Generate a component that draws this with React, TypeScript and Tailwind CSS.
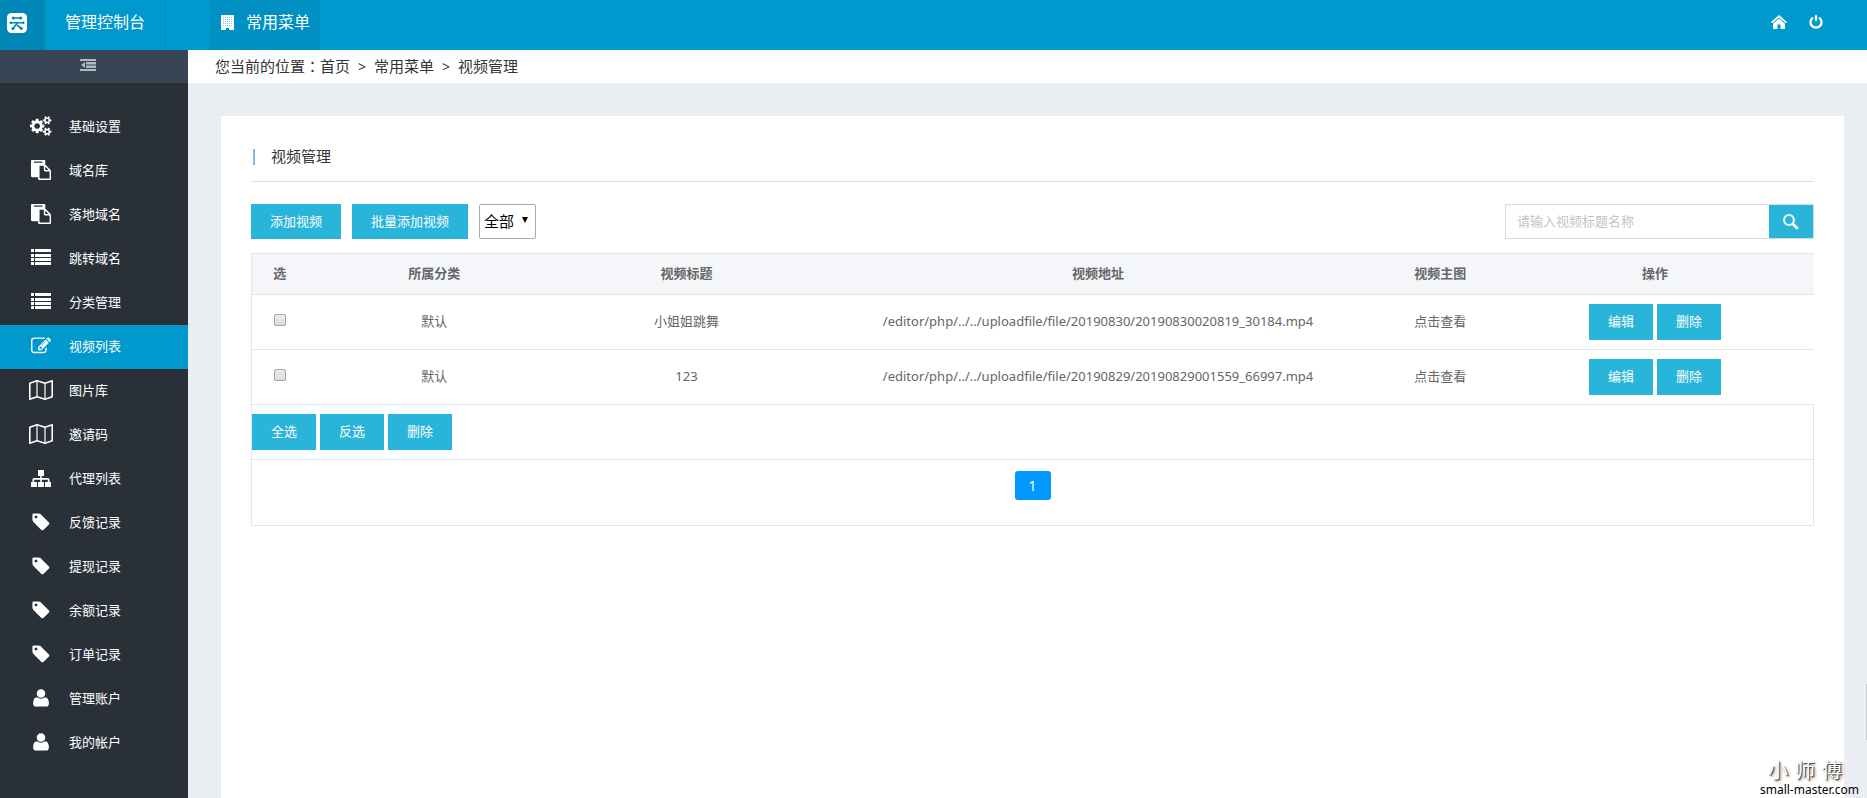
import type { ReactNode } from "react";

const base = "h-5 fill-current";

const CogsIcon = () => (
  <svg viewBox="0 0 1920 1792" className={base} aria-hidden="true">
    <path d="M896 896q0-106-75-181t-181-75-181 75-75 181 75 181 181 75 181-75 75-181zm768 512q0-52-38-90t-90-38-90 38-38 90q0 53 37.500 90.500t90.500 37.500 90.500-37.500 37.500-90.500zm0-1024q0-52-38-90t-90-38-90 38-38 90q0 53 37.500 90.500t90.500 37.500 90.500-37.500 37.500-90.500zm-384 421v185q0 10-7 19.500t-16 10.500l-155 24q-11 35-32 76 34 48 90 115 7 11 7 20 0 12-7 19-23 30-82.500 89.500t-78.500 59.500q-11 0-21-7l-115-90q-37 19-77 31-11 108-23 155-7 24-30 24h-186q-11 0-20-7.500t-10-17.500l-23-153q-34-10-75-31l-118 89q-7 7-20 7-11 0-21-8-144-133-144-160 0-9 7-19 10-14 41-53t47-61q-23-44-35-82l-152-24q-10-1-17-9.500t-7-19.500v-185q0-10 7-19.500t16-10.500l155-24q11-35 32-76-34-48-90-115-7-11-7-20 0-12 7-20 22-30 82-89t79-59q11 0 21 7l115 90q34-18 77-32 11-108 23-154 7-24 30-24h186q11 0 20 7.500t10 17.500l23 153q34 10 75 31l118-89q8-7 20-7 11 0 21 8 144 133 144 160 0 8-7 19-12 16-42 54t-45 60q23 48 34 82l152 23q10 2 17 10.500t7 19.500zm640 533v140q0 16-149 31-12 27-30 52 51 113 51 138 0 4-4 7-122 71-124 71-8 0-46-47t-52-68q-20 2-30 2t-30-2q-14 21-52 68t-46 47q-2 0-124-71-4-3-4-7 0-25 51-138-18-25-30-52-149-15-149-31v-140q0-16 149-31 13-29 30-52-51-113-51-138 0-4 4-7 4-2 35-20t59-34 30-16q8 0 46 46.500t52 67.500q20-2 30-2t30 2q51-71 92-112l6-2q4 0 124 70 4 3 4 7 0 25-51 138 17 23 30 52 149 15 149 31zm0-1024v140q0 16-149 31-12 27-30 52 51 113 51 138 0 4-4 7-122 71-124 71-8 0-46-47t-52-68q-20 2-30 2t-30-2q-14 21-52 68t-46 47q-2 0-124-71-4-3-4-7 0-25 51-138-18-25-30-52-149-15-149-31v-140q0-16 149-31 13-29 30-52-51-113-51-138 0-4 4-7 4-2 35-20t59-34 30-16q8 0 46 46.500t52 67.500q20-2 30-2t30 2q51-71 92-112l6-2q4 0 124 70 4 3 4 7 0 25-51 138 17 23 30 52 149 15 149 31z" />
  </svg>
);

const PasteIcon = () => (
  <svg viewBox="0 0 1792 1792" className={base} aria-hidden="true">
    <path d="M768 1664h896v-640h-416q-40 0-68-28t-28-68v-416h-384v1152zm256-1440v-64q0-13-9.500-22.500t-22.500-9.500h-704q-13 0-22.500 9.500t-9.500 22.500v64q0 13 9.500 22.500t22.500 9.500h704q13 0 22.500-9.500t9.500-22.500zm256 672h299l-299-299v299zm512 128v672q0 40-28 68t-68 28h-960q-40 0-68-28t-28-68v-160h-544q-40 0-68-28t-28-68v-1344q0-40 28-68t68-28h1088q40 0 68 28t28 68v328q21 13 36 28l408 408q28 28 48 76t20 88z" />
  </svg>
);

const ListIcon = () => (
  <svg viewBox="0 0 20 20" className={base} aria-hidden="true">
    {[1, 6, 10, 14].map((y) => (
      <g key={y}>
        <rect x="0" y={y} width="3" height="3" />
        <rect x="4" y={y} width="16" height="3" />
      </g>
    ))}
  </svg>
);

const EditIcon = () => (
  <svg viewBox="0 0 1792 1792" className={base} aria-hidden="true">
    <path d="M888 1184l116-116-152-152-116 116v56h96v96h56zm440-720q-16-16-33 1l-350 350q-17 17-1 33t33-1l350-350q17-17 1-33zm80 594v190q0 119-84.500 203.500t-203.500 84.500h-832q-119 0-203.500-84.500t-84.500-203.500v-832q0-119 84.500-203.500t203.500-84.500h832q63 0 117 25 15 7 18 23 3 17-9 29l-49 49q-14 14-32 8-23-6-45-6h-832q-66 0-113 47t-47 113v832q0 66 47 113t113 47h832q66 0 113-47t47-113v-126q0-13 9-22l64-64q15-15 35-7t20 29zm-96-738l288 288-672 672h-288v-288zm444 132l-92 92-288-288 92-92q28-28 68-28t68 28l152 152q28 28 28 68t-28 68z" />
  </svg>
);

const MapIcon = () => (
  <svg viewBox="0 0 24 20" className={base} fill="none" aria-hidden="true">
    <path
      d="M.8 3.200 8 .8l8 2.400L23.200.8v16L16 19.200l-8-2.400-7.200 2.400z"
      fill="none"
      stroke="currentColor"
      strokeWidth="1.600"
      strokeLinejoin="round"
    />
    <path d="M8 .8v16M16 3.200v16" fill="none" stroke="currentColor" strokeWidth="1.200" />
  </svg>
);

const SitemapIcon = () => (
  <svg viewBox="0 0 20 20" className={base} aria-hidden="true">
    <path d="M7 2h6v6h-2.200v2H17q1.500 0 1.500 1.500V14H20v5h-6v-5h2.800v-2.300h-6V14H13v5H7v-5h2.200v-2.300h-6V14H6v5H0v-5h1.500v-2.500Q1.500 10 3 10h6.200V8H7z" />
  </svg>
);

const TagIcon = () => (
  <svg viewBox="0 0 1792 1792" className={base} aria-hidden="true">
    <path d="M576 448q0-53-37.500-90.500t-90.500-37.500-90.500 37.500-37.500 90.500 37.500 90.500 90.500 37.500 90.500-37.500 37.500-90.500zm1067 576q0 53-37 90l-491 492q-39 37-91 37-53 0-90-37l-715-716q-38-37-64.500-101t-26.500-117v-416q0-52 38-90t90-38h416q53 0 117 26.500t102 64.500l715 714q37 39 37 91z" />
  </svg>
);

const UserIcon = () => (
  <svg viewBox="0 0 1792 1792" className={base} aria-hidden="true">
    <path d="M1600 1399q0 109-62.500 187t-150.500 78h-982q-88 0-150.500-78t-62.500-187q0-85 8.500-160.500t31.500-152 58.500-131 94-89 134.500-34.500q195 128 377 128t377-128q76 0 134.500 34.500t94 89 58.500 131 31.500 152 8.500 160.500zm-320-907q0 159-112.500 271.500t-271.500 112.500-271.500-112.500-112.500-271.500 112.500-271.500 271.500-112.500 271.500 112.500 112.500 271.500z" />
  </svg>
);

const LogoIcon = () => (
  <svg viewBox="0 0 20 20" className="size-5" aria-hidden="true">
    <rect width="20" height="20" rx="4.500" fill="#fff" />
    <g fill="none" stroke="#0087b8" strokeWidth="1.600" strokeLinecap="round">
      <path d="M6.500 5h7M3.500 9.800h13M10.500 9.800L6 15.500M10.500 12.500l4 3" />
    </g>
    <g fill="#0087b8">
      <circle cx="6.300" cy="5" r="1.600" />
      <circle cx="13.700" cy="5" r="1.600" />
      <circle cx="3.800" cy="9.800" r="1.300" />
      <circle cx="16.200" cy="9.800" r="1.300" />
      <circle cx="6" cy="15.500" r="1.600" />
      <circle cx="14.300" cy="15.300" r="1.600" />
    </g>
  </svg>
);

const BuildingIcon = () => (
  <svg viewBox="0 0 13 15" className="h-[15px] w-[13px]" aria-hidden="true">
    <path d="M0 0h13v15H8v-2H5v2H0z" fill="#fff" />
    <path d="M2 2.500h9M2 4.500h9M2 6.500h9M2 8.500h9M2 10.500h9" stroke="#0090c4" strokeWidth=".5" strokeDasharray="1 1" />
  </svg>
);

const OutdentIcon = () => (
  <svg viewBox="0 0 16 12" className="h-3 w-4 fill-current" aria-hidden="true">
    <path d="M0 0h16v2H0zM6 3h10v2.400H6zM6 6.600h10V9H6zM0 10h16v2H0zM5 3v6L1 6z" />
  </svg>
);

const HomeIcon = () => (
  <svg viewBox="0 0 16 14" className="h-[14px] w-4 fill-current" aria-hidden="true">
    <path d="M8 0l8 7-1.200 1.300L8 2.400 1.200 8.300 0 7zM8 3.600l6 5.200V14H9.500V9.500h-3V14H2V8.800z" />
  </svg>
);

const PowerIcon = () => (
  <svg viewBox="0 0 14 14" className="size-[14px]" fill="none" stroke="currentColor" strokeWidth="2.300" aria-hidden="true">
    <path d="M4 2.600a5.500 5.500 0 1 0 6 0M7 .3v5.500" />
  </svg>
);

const SearchIcon = () => (
  <svg viewBox="0 0 16 16" className="size-4" fill="none" stroke="currentColor" aria-hidden="true">
    <circle cx="6" cy="6" r="4.900" strokeWidth="2" />
    <path d="M9.700 9.700l5 5" strokeWidth="2.800" />
  </svg>
);

const menu: { label: string; icon: ReactNode; active?: boolean }[] = [
  { label: "基础设置", icon: <CogsIcon /> },
  { label: "域名库", icon: <PasteIcon /> },
  { label: "落地域名", icon: <PasteIcon /> },
  { label: "跳转域名", icon: <ListIcon /> },
  { label: "分类管理", icon: <ListIcon /> },
  { label: "视频列表", icon: <EditIcon />, active: true },
  { label: "图片库", icon: <MapIcon /> },
  { label: "邀请码", icon: <MapIcon /> },
  { label: "代理列表", icon: <SitemapIcon /> },
  { label: "反馈记录", icon: <TagIcon /> },
  { label: "提现记录", icon: <TagIcon /> },
  { label: "余额记录", icon: <TagIcon /> },
  { label: "订单记录", icon: <TagIcon /> },
  { label: "管理账户", icon: <UserIcon /> },
  { label: "我的帐户", icon: <UserIcon /> },
];

const videos = [
  { id: 1, category: "默认", title: "小姐姐跳舞", url: "/editor/php/../../uploadfile/file/20190830/20190830020819_30184.mp4" },
  { id: 2, category: "默认", title: "123", url: "/editor/php/../../uploadfile/file/20190829/20190829001559_66997.mp4" },
];

const columns = [
  { label: "选", width: "w-[3.6%]" },
  { label: "所属分类", width: "w-[16.2%]" },
  { label: "视频标题", width: "w-[16.1%]" },
  { label: "视频地址", width: "w-[36.6%]" },
  { label: "视频主图", width: "w-[7.2%]" },
  { label: "操作", width: "w-[20.3%]" },
];

function ActionButton({ children }: { children: ReactNode }) {
  return (
    <button type="button" className="h-9 w-16 bg-[#29b4d9] text-center text-white">
      {children}
    </button>
  );
}

export default function App() {
  return (
    <div className="relative flex h-screen flex-col overflow-hidden bg-[#eaedf1] font-['Noto_Sans','Noto_Sans_CJK_SC',sans-serif] text-[13px] text-[#666]">
      <header className="flex h-[50px] shrink-0 bg-[#0099cd] text-base text-white">
        <a href="#" aria-label="管理控制台首页" className="flex w-[45px] items-center bg-[#0087b8] pb-1 pl-[7px]">
          <LogoIcon />
        </a>
        <a href="#" className="flex w-[121px] items-center border-r border-[#008fc3] pb-[6px] pl-5">
          管理控制台
        </a>
        <a href="#" className="ml-11 flex w-[110px] items-center gap-3 bg-[#0090c4] pb-[6px] pl-[11px]">
          <BuildingIcon />
          常用菜单
        </a>
        <nav className="ml-auto flex items-center gap-[22px] pr-11 pb-[6px]">
          <a href="#" aria-label="首页"><HomeIcon /></a>
          <a href="#" aria-label="退出"><PowerIcon /></a>
        </nav>
      </header>

      <div className="flex min-h-0 flex-1">
        <aside className="w-[188px] shrink-0 bg-[#293038] text-white">
          <button type="button" aria-label="收起菜单" className="flex h-[33px] w-full items-center justify-center bg-[#394555] pr-3 pb-[3px] text-[#aeb9c2]">
            <OutdentIcon />
          </button>
          <ul className="pt-[22px]">
            {menu.map((item) => (
              <li key={item.label}>
                <a href="#" className={`flex h-11 items-center pl-[29px] ${item.active ? "bg-[#0099cd]" : ""}`}>
                  <span className="flex w-6 justify-center pb-[2px]">{item.icon}</span>
                  <span className="pl-4">{item.label}</span>
                </a>
              </li>
            ))}
          </ul>
        </aside>

        <main className="flex min-w-0 flex-1 flex-col">
          <div className="flex h-[33px] shrink-0 items-center bg-white pl-[27px] text-[15px] text-[#333]">
            <span>您当前的位置</span>
            <span lang="zh-TW" className="font-['Noto_Sans_CJK_TC',sans-serif]">：</span>
            <a href="#">首页</a>
            <span className="px-2 text-sm">&gt;</span>
            <a href="#">常用菜单</a>
            <span className="px-2 text-sm">&gt;</span>
            <span>视频管理</span>
          </div>

          <section className="mt-[33px] mr-[23px] ml-[33px] flex-1 bg-white px-[30px]">
            <div className="flex h-[66px] items-center border-b border-[#dddfe1] pt-4 pl-[2px]">
              <h1 className="flex items-center gap-4 text-[15px] text-[#333]">
                <span className="h-4 w-[2px] bg-[#87b8e1]" />
                视频管理
              </h1>
            </div>

            <div className="mt-[22px] flex items-center">
              <button type="button" className="h-[35px] bg-[#29b4d9] px-[19px] text-white">添加视频</button>
              <button type="button" className="ml-[11px] h-[35px] bg-[#29b4d9] px-[19px] text-white">批量添加视频</button>
              <div className="relative ml-[11px]">
                <select aria-label="分类" className="h-[35px] w-[57px] appearance-none rounded-xs border border-[#a9a9a9] bg-white pl-1 text-[15px] text-black">
                  <option>全部</option>
                </select>
                <span className="pointer-events-none absolute top-[13px] right-2 border-x-[3px] border-t-[6px] border-x-transparent border-t-black" />
              </div>
              <form className="ml-auto flex h-[35px] w-[309px] border border-[#d9dbdd]" onSubmit={(e) => e.preventDefault()}>
                <input type="text" aria-label="视频标题" placeholder="请输入视频标题名称" className="min-w-0 flex-1 px-[11px] outline-none placeholder:text-[#c4c4c4]" />
                <button type="submit" aria-label="搜索" className="flex w-11 items-center justify-center bg-[#29b4d9] text-white">
                  <SearchIcon />
                </button>
              </form>
            </div>

            <table className="mt-[14px] w-full table-fixed border-collapse border-y border-l border-[#e1e6eb] text-center">
              <thead>
                <tr className="h-[41px] border-b border-[#e1e6eb] bg-[#f4f6fa]">
                  {columns.map((c) => (
                    <th key={c.label} scope="col" className={`${c.width} font-bold`}>{c.label}</th>
                  ))}
                </tr>
              </thead>
              <tbody>
                {videos.map((v) => (
                  <tr key={v.id} className="h-[55px] border-b border-[#e1e6eb]">
                    <td>
                      <input
                        type="checkbox"
                        aria-label={`选择 ${v.title}`}
                        className="mb-[6px] size-3 appearance-none rounded-xs border border-[#a5a5a5] bg-linear-to-b from-[#ececec] to-[#dcdcdc] align-middle checked:bg-[#29b4d9]"
                      />
                    </td>
                    <td>{v.category}</td>
                    <td>{v.title}</td>
                    <td>{v.url}</td>
                    <td><a href="#">点击查看</a></td>
                    <td>
                      <div className="flex justify-center gap-1">
                        <ActionButton>编辑</ActionButton>
                        <ActionButton>删除</ActionButton>
                      </div>
                    </td>
                  </tr>
                ))}
                <tr className="h-[55px]">
                  <td colSpan={6} className="border border-[#e1e6eb]">
                    <div className="flex gap-1">
                      <ActionButton>全选</ActionButton>
                      <ActionButton>反选</ActionButton>
                      <ActionButton>删除</ActionButton>
                    </div>
                  </td>
                </tr>
                <tr className="h-[66px]">
                  <td colSpan={6} className="border border-[#e1e6eb] pb-[14px]">
                    <button type="button" aria-current="page" className="h-[29px] w-9 rounded-[3px] bg-[#0099ff] align-middle text-sm text-white">1</button>
                  </td>
                </tr>
              </tbody>
            </table>
          </section>
        </main>
      </div>

      <div className="absolute right-0 bottom-[58px] h-14 w-px bg-[#c9cdd2]" />
      <div className="absolute right-2 bottom-0 flex flex-col items-end text-black">
        <span className="flex gap-[7px] pr-[17px] text-xl leading-[22px] text-white [text-shadow:1px_1px_1px_#333,2px_2px_3px_#999]">
          <span>小</span>
          <span>师</span>
          <span>傅</span>
        </span>
        <span className="text-xs leading-4">small-master.com</span>
      </div>
    </div>
  );
}
